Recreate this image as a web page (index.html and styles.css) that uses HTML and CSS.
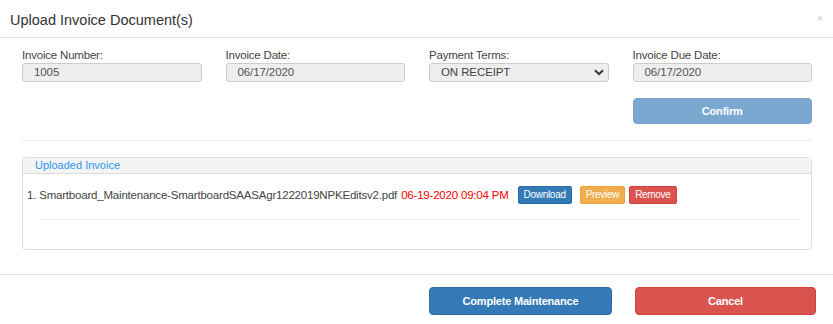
FILE: index.html
```html
<!DOCTYPE html>
<html>
<head>
<meta charset="utf-8">
<link rel="stylesheet" href="styles.css">
</head>
<body>
<div class="modal">
  <div class="modal-header">
    <h4 class="title">Upload Invoice Document(s)</h4>
    <span class="close">×</span>
  </div>
  <div class="modal-body">
    <div class="fields">
      <div class="field">
        <label>Invoice Number:</label>
        <div class="input">1005</div>
      </div>
      <div class="field">
        <label>Invoice Date:</label>
        <div class="input">06/17/2020</div>
      </div>
      <div class="field">
        <label>Payment Terms:</label>
        <div class="input select"><span>ON RECEIPT</span>
          <svg width="10" height="7" viewBox="0 0 10 7"><path d="M1 1.2 L5 5.2 L9 1.2" fill="none" stroke="#333" stroke-width="2"/></svg>
        </div>
      </div>
      <div class="field">
        <label>Invoice Due Date:</label>
        <div class="input">06/17/2020</div>
      </div>
      <div></div><div></div><div></div>
      <div class="field"><button class="btn confirm">Confirm</button></div>
    </div>
    <div class="rule"></div>
    <div class="panel">
      <div class="panel-heading">Uploaded Invoice</div>
      <div class="panel-body">
        <div class="file-row">
          <span class="fname">1. Smartboard_Maintenance-SmartboardSAASAgr1222019NPKEditsv2.pdf</span>
          <span class="fdate">06-19-2020 09:04 PM</span>
          <span class="xs blue">Download</span>
          <span class="xs orange">Preview</span>
          <span class="xs red">Remove</span>
        </div>
        <div class="inner-rule"></div>
      </div>
    </div>
  </div>
  <div class="modal-footer">
    <button class="btn big blue">Complete Maintenance</button>
    <button class="btn big red cancel">Cancel</button>
  </div>
</div>
</body>
</html>
```
FILE: styles.css
```css
* { box-sizing: border-box; }
body {
  margin: 0;
  background: #fff;
  font-family: "Liberation Sans", Arial, sans-serif;
  color: #333;
  width: 833px;
  height: 324px;
  overflow: hidden;
}
.modal-header {
  height: 38px;
  border-bottom: 1px solid #e5e5e5;
  display: flex;
  align-items: center;
  justify-content: space-between;
  padding: 0 10px 0 10px;
}
.title {
  margin: 0;
  font-size: 14.5px;
  font-weight: normal;
  color: #333;
  position: relative;
  top: 1px;
}
.close {
  font-size: 11px;
  color: #c8c8c8;
  position: relative;
  top: -1px;
}
.modal-body {
  padding: 9px 21px 0 22px;
}
.fields {
  display: grid;
  grid-template-columns: repeat(4, 1fr);
  column-gap: 24px;
  row-gap: 16px;
}
.field label {
  display: block;
  font-size: 11.5px;
  letter-spacing: -0.2px;
  color: #444;
  height: 16px;
  line-height: 16px;
}
.input {
  height: 19px;
  background: #eee;
  border: 1px solid #ccc;
  border-radius: 3px;
  font-size: 11.5px;
  letter-spacing: -0.1px;
  line-height: 17px;
  padding-left: 11px;
  color: #555;
}
.select {
  display: flex;
  justify-content: space-between;
  align-items: center;
  padding-right: 4px;
  color: #444;
}
.btn {
  border: 1px solid transparent;
  border-radius: 4px;
  font-family: "Liberation Sans", Arial, sans-serif;
  font-size: 11px;
  letter-spacing: -0.2px;
  font-weight: bold;
  color: #fff;
  cursor: default;
}
.confirm {
  width: 100%;
  height: 26px;
  background: #7aa8d0;
  border-color: #7a9fc8;
}
.rule {
  height: 1px;
  background: #eee;
  margin-top: 16px;
}
.panel {
  margin-top: 16px;
  border: 1px solid #ddd;
  border-radius: 4px;
  height: 93px;
}
.panel-heading {
  height: 16px;
  background: #f4f4f4;
  border-bottom: 1px solid #ddd;
  border-radius: 3px 3px 0 0;
  font-size: 11px;
  line-height: 15px;
  color: #2b95f0;
  padding-left: 12px;
}
.panel-body {
  padding: 12px 12px 0 4px;
}
.file-row {
  display: flex;
  align-items: center;
  font-size: 11.5px;
  letter-spacing: -0.2px;
  height: 18px;
}
.fname { color: #444; }
.fdate { color: #f00; margin-left: 4px; margin-right: 9px; }
.xs {
  font-size: 10px;
  letter-spacing: -0.3px;
  color: #fff;
  height: 18px;
  line-height: 16px;
  border-radius: 2px;
  padding: 0 5px;
  border: 1px solid transparent;
}
.xs.orange { margin-left: 8px; }
.xs.red { margin-left: 4px; }
.blue { background: #337ab7; border-color: #2e6da4; }
.orange { background: #f0ad4e; border-color: #eea236; }
.red { background: #d9534f; border-color: #d43f3a; }
.inner-rule {
  height: 1px;
  background: #eee;
  margin: 15px 0 0 12px;
}
.modal-footer {
  margin-top: 24px;
  border-top: 1px solid #e5e5e5;
  display: flex;
  padding: 12px 0 0 429px;
}
.big {
  height: 28px;
  width: 183px;
}
.cancel {
  margin-left: 23px;
  width: 181px;
}
```
